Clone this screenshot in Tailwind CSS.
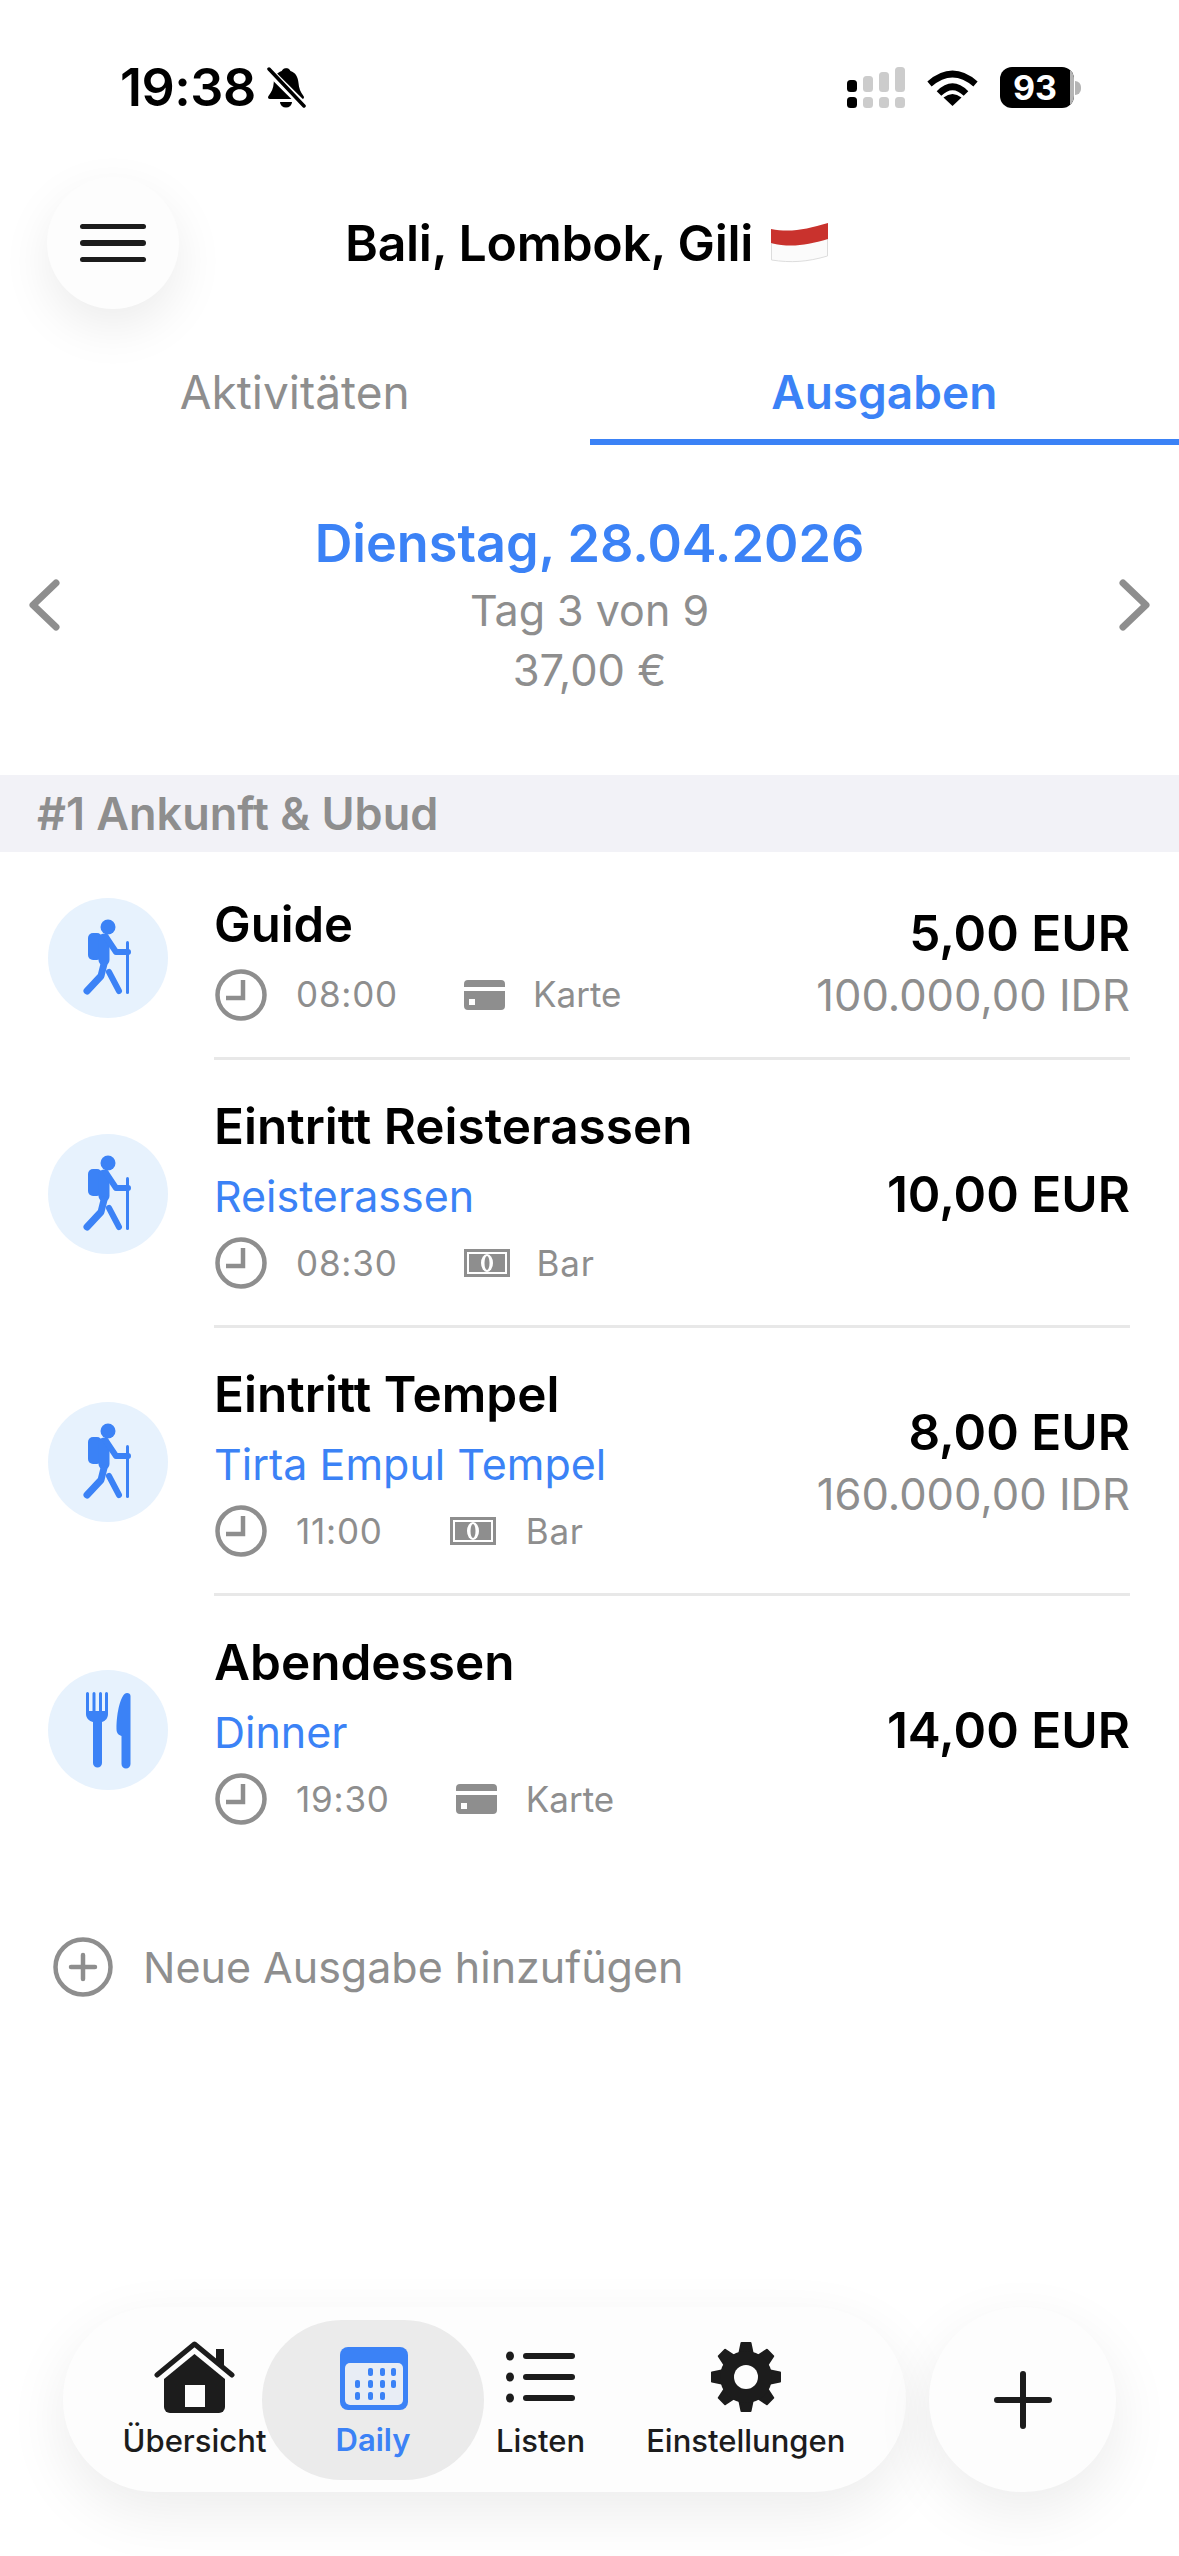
<!DOCTYPE html>
<html lang="de">
<head>
  <meta charset="UTF-8" />
  <meta name="viewport" content="width=device-width, initial-scale=1" />
  <title>Bali, Lombok, Gili</title>
  <script src="https://cdn.jsdelivr.net/npm/@tailwindcss/browser@4"></script>
</head>
<body class="bg-white font-[family-name:Inter,sans-serif] text-black">
  <div class="w-[1179px] h-[2556px] flex flex-col overflow-hidden">

    <!-- Status bar -->
    <div class="flex items-center h-[41px] mt-[67px] pl-[120px] pr-[98px]">
      <span class="text-[52px] leading-[41px] font-semibold tracking-[-0.5px]">19:38</span>
      <svg class="ml-[10px] w-[40px] h-[42px]" viewBox="0 0 40 42">
        <path fill="#000" d="M20 1c2 0 3.500 1 4.500 3c5 1.500 7.500 6 8 12c.3 5 2 9 5 13c1 1.500 .5 3-1.500 3H4c-2 0-2.500-1.500-1.500-3c3-4 5-8 5.200-13c.3-6 3-10.500 8-12c1-2 2.800-3 4.800-3z"/>
        <path fill="#000" d="M14 35h12a6 5.500 0 0 1-12 0z"/>
        <path stroke="#fff" stroke-width="8" d="M2 3L38 39"/>
        <path stroke="#000" stroke-width="3.500" stroke-linecap="round" d="M3 2L38 39"/>
      </svg>
      <div class="ml-auto flex items-center">
        <svg class="w-[58px] h-[41px]" viewBox="0 0 58 41">
          <rect x="0" y="13" width="10" height="12" rx="3.500" fill="#000"/>
          <rect x="16" y="9" width="10" height="16" rx="3.500" fill="#cccccc"/>
          <rect x="32" y="5" width="10" height="20" rx="3.500" fill="#cccccc"/>
          <rect x="48" y="0" width="10" height="25" rx="3.500" fill="#cccccc"/>
          <rect x="0" y="30" width="10" height="11" rx="3.500" fill="#000"/>
          <rect x="16" y="30" width="10" height="11" rx="3.500" fill="#cccccc"/>
          <rect x="32" y="30" width="10" height="11" rx="3.500" fill="#cccccc"/>
          <rect x="48" y="30" width="10" height="11" rx="3.500" fill="#cccccc"/>
        </svg>
        <svg class="ml-[22px] w-[51px] h-[37px]" viewBox="0 0 51 37">
          <path fill="none" stroke="#000" stroke-width="6.500" d="M2.500 15Q25.500 -5 48.500 15"/>
          <path fill="none" stroke="#000" stroke-width="6.500" d="M12 24.500Q25.500 11 39 24.500"/>
          <path fill="#000" d="M25.500 37L16.500 28.500Q25.500 21.500 34.500 28.500Z"/>
        </svg>
        <div class="ml-[22px] relative w-[74px] h-[41px] rounded-[12px] bg-black flex items-center justify-center overflow-hidden">
          <span class="text-white text-[34px] leading-[41px] font-bold pr-[4px]">93</span>
          <span class="absolute right-0 top-0 bottom-0 w-[4px] bg-[#b5b5b5]"></span>
        </div>
        <span class="ml-[1px] w-[6px] h-[14px] rounded-r-full bg-[#b5b5b5]"></span>
      </div>
    </div>

    <!-- Header -->
    <div class="flex items-center mt-[69px] pl-[47px]">
      <button class="w-[132px] h-[132px] rounded-full bg-[#fdfdfd] shadow-[0_18px_50px_rgba(0,0,0,0.08)] flex flex-col items-center justify-center gap-[11px]">
        <span class="block w-[66px] h-[5.500px] rounded-full bg-[#1c1c1c]"></span>
        <span class="block w-[66px] h-[5.500px] rounded-full bg-[#1c1c1c]"></span>
        <span class="block w-[66px] h-[5.500px] rounded-full bg-[#1c1c1c]"></span>
      </button>
      <h1 class="ml-[166px] text-[50px] leading-[60px] font-semibold tracking-[-0.3px]">Bali, Lombok, Gili</h1>
      <svg class="ml-[18px] w-[57px] h-[40px]" viewBox="0 0 57 40">
        <path fill="#fbfbfb" stroke="#dddddd" stroke-width="1" d="M.5 20C20 23 36 20 56.500 14V33C36 39 20 40 .5 37Z"/>
        <path fill="#c9322d" d="M0 6C20 10 36 6 57 0V16C36 22 20 25 0 20Z"/>
      </svg>
    </div>

    <!-- Tabs -->
    <div class="grid grid-cols-2 h-[136px] text-[46px]">
      <div class="flex items-end justify-center pb-[23px] text-[#8e8e8e] leading-[60px]">Aktivitäten</div>
      <div class="flex items-end justify-center pb-[17px] text-[#3b82f6] font-semibold leading-[60px] border-b-[6px] border-[#3b82f6] h-[136px]">Ausgaben</div>
    </div>

    <!-- Date -->
    <div class="flex items-center justify-between mt-[65px] mb-[75px] pl-[28px] pr-[28px]">
      <svg class="w-[32px] h-[52px]" viewBox="0 0 32 52" fill="none" stroke="#8e8e8e" stroke-width="7" stroke-linecap="round" stroke-linejoin="round"><path d="M28 4L5 26L28 48"/></svg>
      <div class="text-center">
        <div class="text-[52.200px] leading-[66px] font-semibold text-[#3b82f6]">Dienstag, 28.04.2026</div>
        <div class="text-[43px] leading-[60px] mt-[4px] text-[#8e8e8e]">Tag 3 von 9</div>
        <div class="text-[43.500px] leading-[60px] text-[#8e8e8e]">37,00 €</div>
      </div>
      <svg class="w-[32px] h-[52px]" viewBox="0 0 32 52" fill="none" stroke="#8e8e8e" stroke-width="7" stroke-linecap="round" stroke-linejoin="round"><path d="M4 4L27 26L4 48"/></svg>
    </div>

    <!-- Section -->
    <div class="h-[77px] bg-[#f2f2f7] pl-[37px] flex items-center text-[45px] font-semibold text-[#8e8e8e]">#1 Ankunft &amp; Ubud</div>

    <!-- Guide -->
    <div class="flex items-center pl-[48px] pr-[49px]">
      <div class="w-[120px] h-[120px] mt-[4px] rounded-full bg-[#e7f2fd] shrink-0">
        <svg class="w-[120px] h-[120px]" viewBox="0 0 120 120" fill="#3b82f6" stroke="#3b82f6" stroke-linecap="round" stroke-linejoin="round">
          <circle cx="60" cy="29" r="7.500" stroke="none"/><rect x="40" y="35" width="14" height="27" rx="5" stroke="none"/>
          <path fill="none" stroke-width="11" d="M56 41L56 62"/><path fill="none" stroke-width="6" d="M58 39L68 54L80 54"/>
          <path fill="none" stroke-width="7" d="M56 66L53 78L39 93"/><path fill="none" stroke-width="6" d="M61 74L71 93"/>
          <rect x="78" y="43" width="3" height="53" rx="1.500" stroke="none"/>
        </svg>
      </div>
      <div class="flex-1 ml-[46px] flex items-center justify-between border-b-[3px] border-[#e8e8e8] pt-[36px] pb-[31px]">
        <div>
          <div class="text-[49px] leading-[60px] font-semibold">Guide</div>
          <div class="flex items-center h-[50px] mt-[15px] text-[35px] text-[#8e8e8e] tracking-[0.8px]">
            <svg class="ml-[1px] w-[52px] h-[52px] mr-[29px] shrink-0" viewBox="0 0 52 52" fill="none" stroke="#8e8e8e" stroke-width="4.500"><circle cx="26" cy="26" r="23.500"/><path d="M28 11V29H11"/></svg>
            <span>08:00</span>
            <svg class="ml-[66px] mr-[28px] w-[41px] h-[30px]" viewBox="0 0 41 30"><path fill="#8e8e8e" d="M4 0H37a4 4 0 0 1 4 4V7H0V4a4 4 0 0 1 4-4ZM0 11H41V26a4 4 0 0 1-4 4H4a4 4 0 0 1-4-4Z"/><rect x="5" y="19" width="6" height="6" fill="#fff"/></svg>
            <span class="tracking-normal">Karte</span>
          </div>
        </div>
        <div class="text-right pt-[14px]">
          <div class="text-[49.500px] leading-[62px] font-semibold">5,00 EUR</div>
          <div class="text-[43.500px] leading-[62px] text-[#8e8e8e]">100.000,00 IDR</div>
        </div>
      </div>
    </div>

    <!-- Eintritt Reisterassen -->
    <div class="flex items-center pl-[48px] pr-[49px]">
      <div class="w-[120px] h-[120px] rounded-full bg-[#e7f2fd] shrink-0">
        <svg class="w-[120px] h-[120px]" viewBox="0 0 120 120" fill="#3b82f6" stroke="#3b82f6" stroke-linecap="round" stroke-linejoin="round">
          <circle cx="60" cy="29" r="7.500" stroke="none"/><rect x="40" y="35" width="14" height="27" rx="5" stroke="none"/>
          <path fill="none" stroke-width="11" d="M56 41L56 62"/><path fill="none" stroke-width="6" d="M58 39L68 54L80 54"/>
          <path fill="none" stroke-width="7" d="M56 66L53 78L39 93"/><path fill="none" stroke-width="6" d="M61 74L71 93"/>
          <rect x="78" y="43" width="3" height="53" rx="1.500" stroke="none"/>
        </svg>
      </div>
      <div class="flex-1 ml-[46px] flex items-center justify-between border-b-[3px] border-[#e8e8e8] pt-[36px] pb-[37px]">
        <div>
          <div class="text-[49.500px] leading-[60px] font-semibold">Eintritt Reisterassen</div>
          <div class="text-[43px] leading-[56px] mt-[12px] text-[#3b82f6]">Reisterassen</div>
          <div class="flex items-center h-[50px] mt-[14px] text-[35px] text-[#8e8e8e] tracking-[0.8px]">
            <svg class="ml-[1px] w-[52px] h-[52px] mr-[29px] shrink-0" viewBox="0 0 52 52" fill="none" stroke="#8e8e8e" stroke-width="4.500"><circle cx="26" cy="26" r="23.500"/><path d="M28 11V29H11"/></svg>
            <span>08:30</span>
            <svg class="ml-[66px] mr-[27px] w-[46px] h-[28px]" viewBox="0 0 46 28"><rect x="1.500" y="1.500" width="43" height="25" fill="#fff" stroke="#8e8e8e" stroke-width="3"/><rect x="5" y="5" width="36" height="18" fill="#8e8e8e"/><ellipse cx="23" cy="14" rx="6" ry="9" fill="#fff"/><ellipse cx="23" cy="14" rx="2.500" ry="7" fill="#8e8e8e"/></svg>
            <span>Bar</span>
          </div>
        </div>
        <div class="text-[49.500px] leading-[62px] font-semibold pt-[3px]">10,00 EUR</div>
      </div>
    </div>

    <!-- Eintritt Tempel -->
    <div class="flex items-center pl-[48px] pr-[49px]">
      <div class="w-[120px] h-[120px] rounded-full bg-[#e7f2fd] shrink-0">
        <svg class="w-[120px] h-[120px]" viewBox="0 0 120 120" fill="#3b82f6" stroke="#3b82f6" stroke-linecap="round" stroke-linejoin="round">
          <circle cx="60" cy="29" r="7.500" stroke="none"/><rect x="40" y="35" width="14" height="27" rx="5" stroke="none"/>
          <path fill="none" stroke-width="11" d="M56 41L56 62"/><path fill="none" stroke-width="6" d="M58 39L68 54L80 54"/>
          <path fill="none" stroke-width="7" d="M56 66L53 78L39 93"/><path fill="none" stroke-width="6" d="M61 74L71 93"/>
          <rect x="78" y="43" width="3" height="53" rx="1.500" stroke="none"/>
        </svg>
      </div>
      <div class="flex-1 ml-[46px] flex items-center justify-between border-b-[3px] border-[#e8e8e8] pt-[36px] pb-[37px]">
        <div>
          <div class="text-[49.500px] leading-[60px] font-semibold">Eintritt Tempel</div>
          <div class="text-[43px] leading-[56px] mt-[12px] text-[#3b82f6]">Tirta Empul Tempel</div>
          <div class="flex items-center h-[50px] mt-[14px] text-[35px] text-[#8e8e8e] tracking-[0.8px]">
            <svg class="ml-[1px] w-[52px] h-[52px] mr-[29px] shrink-0" viewBox="0 0 52 52" fill="none" stroke="#8e8e8e" stroke-width="4.500"><circle cx="26" cy="26" r="23.500"/><path d="M28 11V29H11"/></svg>
            <span>11:00</span>
            <svg class="ml-[67px] mr-[30px] w-[46px] h-[28px]" viewBox="0 0 46 28"><rect x="1.500" y="1.500" width="43" height="25" fill="#fff" stroke="#8e8e8e" stroke-width="3"/><rect x="5" y="5" width="36" height="18" fill="#8e8e8e"/><ellipse cx="23" cy="14" rx="6" ry="9" fill="#fff"/><ellipse cx="23" cy="14" rx="2.500" ry="7" fill="#8e8e8e"/></svg>
            <span>Bar</span>
          </div>
        </div>
        <div class="text-right pt-[6px]">
          <div class="text-[49.500px] leading-[62px] font-semibold">8,00 EUR</div>
          <div class="text-[43.500px] leading-[62px] text-[#8e8e8e]">160.000,00 IDR</div>
        </div>
      </div>
    </div>

    <!-- Abendessen -->
    <div class="flex items-center pl-[48px] pr-[49px]">
      <div class="w-[120px] h-[120px] rounded-full bg-[#e7f2fd] shrink-0">
        <svg class="w-[120px] h-[120px]" viewBox="0 0 120 120" fill="#3b82f6">
          <path d="M38 23.500a1.500 1.500 0 0 1 3 0V41h3.500V23.500a1.500 1.500 0 0 1 3 0V41H51V23.500a1.500 1.500 0 0 1 3 0V41H57V23.500a1.500 1.500 0 0 1 3 0V44c0 4-2.500 7-6 8V93a4.500 4.500 0 0 1-9 0V52c-4-1-7-4-7-8Z"/>
          <path d="M79 23c2 0 3.500 1 3.500 3V94a4.500 4.500 0 0 1-9 0V66c-3-1-5-3-5-7C68.500 42 73 23 79 23Z"/>
        </svg>
      </div>
      <div class="flex-1 ml-[46px] flex items-center justify-between border-b-[3px] border-transparent pt-[36px] pb-[37px]">
        <div>
          <div class="text-[49.500px] leading-[60px] font-semibold">Abendessen</div>
          <div class="text-[43px] leading-[56px] mt-[12px] text-[#3b82f6]">Dinner</div>
          <div class="flex items-center h-[50px] mt-[14px] text-[35px] text-[#8e8e8e] tracking-[0.8px]">
            <svg class="ml-[1px] w-[52px] h-[52px] mr-[29px] shrink-0" viewBox="0 0 52 52" fill="none" stroke="#8e8e8e" stroke-width="4.500"><circle cx="26" cy="26" r="23.500"/><path d="M28 11V29H11"/></svg>
            <span>19:30</span>
            <svg class="ml-[66px] mr-[29px] w-[41px] h-[30px]" viewBox="0 0 41 30"><path fill="#8e8e8e" d="M4 0H37a4 4 0 0 1 4 4V7H0V4a4 4 0 0 1 4-4ZM0 11H41V26a4 4 0 0 1-4 4H4a4 4 0 0 1-4-4Z"/><rect x="5" y="19" width="6" height="6" fill="#fff"/></svg>
            <span class="tracking-normal">Karte</span>
          </div>
        </div>
        <div class="text-[49.500px] leading-[62px] font-semibold pt-[4px]">14,00 EUR</div>
      </div>
    </div>

    <!-- Add expense -->
    <div class="flex items-center mt-[73px] pl-[53px] text-[43px] leading-[60px] text-[#8e8e8e]">
      <svg class="w-[60px] h-[60px] mr-[30px]" viewBox="0 0 60 60" fill="none" stroke="#8e8e8e" stroke-linecap="round"><circle cx="30" cy="30" r="27.500" stroke-width="4.500"/><path stroke-width="4.500" d="M30 18V42M18 30H42"/></svg>
      <span>Neue Ausgabe hinzufügen</span>
    </div>

    <!-- Bottom nav -->
    <div class="mt-auto mb-[64px] ml-[63px] flex items-stretch gap-[23px]">
      <nav class="w-[843px] h-[185px] rounded-[92px] bg-[#fdfdfd] shadow-[0_20px_60px_rgba(0,0,0,0.08)] flex items-center pl-[60px] text-[31px] leading-[40px] font-medium text-[#1c1c1c]">
        <div class="w-[143px] flex flex-col items-center pt-[3px]">
          <svg class="w-[81px] h-[72px]" viewBox="0 0 81 72">
            <path fill="#1c1c1c" d="M62 8H70V27L62 20Z"/>
            <path fill="none" stroke="#1c1c1c" stroke-width="5" stroke-linecap="round" stroke-linejoin="round" d="M3 34L40.500 3L78 34"/>
            <path fill="#1c1c1c" d="M40.500 13L71 38V66a6 6 0 0 1-6 6H16a6 6 0 0 1-6-6V38Z"/>
            <rect x="31" y="44" width="20" height="22" fill="#fdfdfd"/>
          </svg>
          <span class="mt-[8px] whitespace-nowrap">Übersicht</span>
        </div>
        <div class="-ml-[4px] w-[222px] h-[160px] rounded-[80px] bg-[#ebebeb] flex flex-col items-center justify-center text-[#3b82f6] font-semibold pt-[4px]">
          <svg class="w-[68px] h-[63px] mt-[4px] ml-[2px]" viewBox="0 0 68 63">
            <rect width="68" height="63" rx="8" fill="#3b82f6"/>
            <rect x="5" y="16" width="58" height="42" rx="5" fill="#e8edf5"/>
            <g fill="#3b82f6">
              <rect x="28" y="21" width="5" height="8" rx="2"/><rect x="40" y="21" width="5" height="8" rx="2"/><rect x="51" y="21" width="5" height="8" rx="2"/>
              <rect x="15" y="33" width="5" height="8" rx="2"/><rect x="28" y="33" width="5" height="8" rx="2"/><rect x="40" y="33" width="5" height="8" rx="2"/><rect x="51" y="33" width="5" height="8" rx="2"/>
              <rect x="15" y="45" width="5" height="8" rx="2"/><rect x="28" y="45" width="5" height="8" rx="2"/><rect x="40" y="45" width="5" height="8" rx="2"/>
            </g>
          </svg>
          <span class="mt-[10px]">Daily</span>
        </div>
        <div class="ml-[12px] flex flex-col items-center pt-[3px]">
          <svg class="w-[69px] h-[72px]" viewBox="0 0 69 72" fill="#1c1c1c">
            <ellipse cx="4" cy="15" rx="4" ry="4.500"/><rect x="17" y="12" width="52" height="6" rx="3"/>
            <ellipse cx="4" cy="36" rx="4" ry="4.500"/><rect x="17" y="33" width="52" height="6" rx="3"/>
            <ellipse cx="4" cy="57" rx="4" ry="4.500"/><rect x="17" y="54" width="52" height="6" rx="3"/>
          </svg>
          <span class="mt-[8px]">Listen</span>
        </div>
        <div class="ml-[61px] flex flex-col items-center pt-[3px]">
          <svg class="w-[72px] h-[72px]" viewBox="0 0 72 72">
            <g fill="#1c1c1c" stroke="#1c1c1c" stroke-width="2" stroke-linejoin="round">
              <path d="M29 14L31.500 2H40.500L43 14V58L40.500 70H31.500L29 58Z"/>
              <path transform="rotate(45 36 36)" d="M29 14L31.500 2H40.500L43 14V58L40.500 70H31.500L29 58Z"/>
              <path transform="rotate(90 36 36)" d="M29 14L31.500 2H40.500L43 14V58L40.500 70H31.500L29 58Z"/>
              <path transform="rotate(135 36 36)" d="M29 14L31.500 2H40.500L43 14V58L40.500 70H31.500L29 58Z"/>
            </g>
            <circle cx="36" cy="36" r="26" fill="#1c1c1c"/>
            <circle cx="36" cy="36" r="12" fill="#fdfdfd"/>
          </svg>
          <span class="mt-[8px] whitespace-nowrap">Einstellungen</span>
        </div>
      </nav>
      <button class="w-[187px] h-[185px] rounded-full bg-[#fdfdfd] shadow-[0_20px_60px_rgba(0,0,0,0.08)] flex items-center justify-center">
        <svg class="w-[58px] h-[58px]" viewBox="0 0 58 58" fill="none" stroke="#1c1c1c" stroke-width="6" stroke-linecap="round"><path d="M29 3V55M3 29H55"/></svg>
      </button>
    </div>
  </div>
</body>
</html>
